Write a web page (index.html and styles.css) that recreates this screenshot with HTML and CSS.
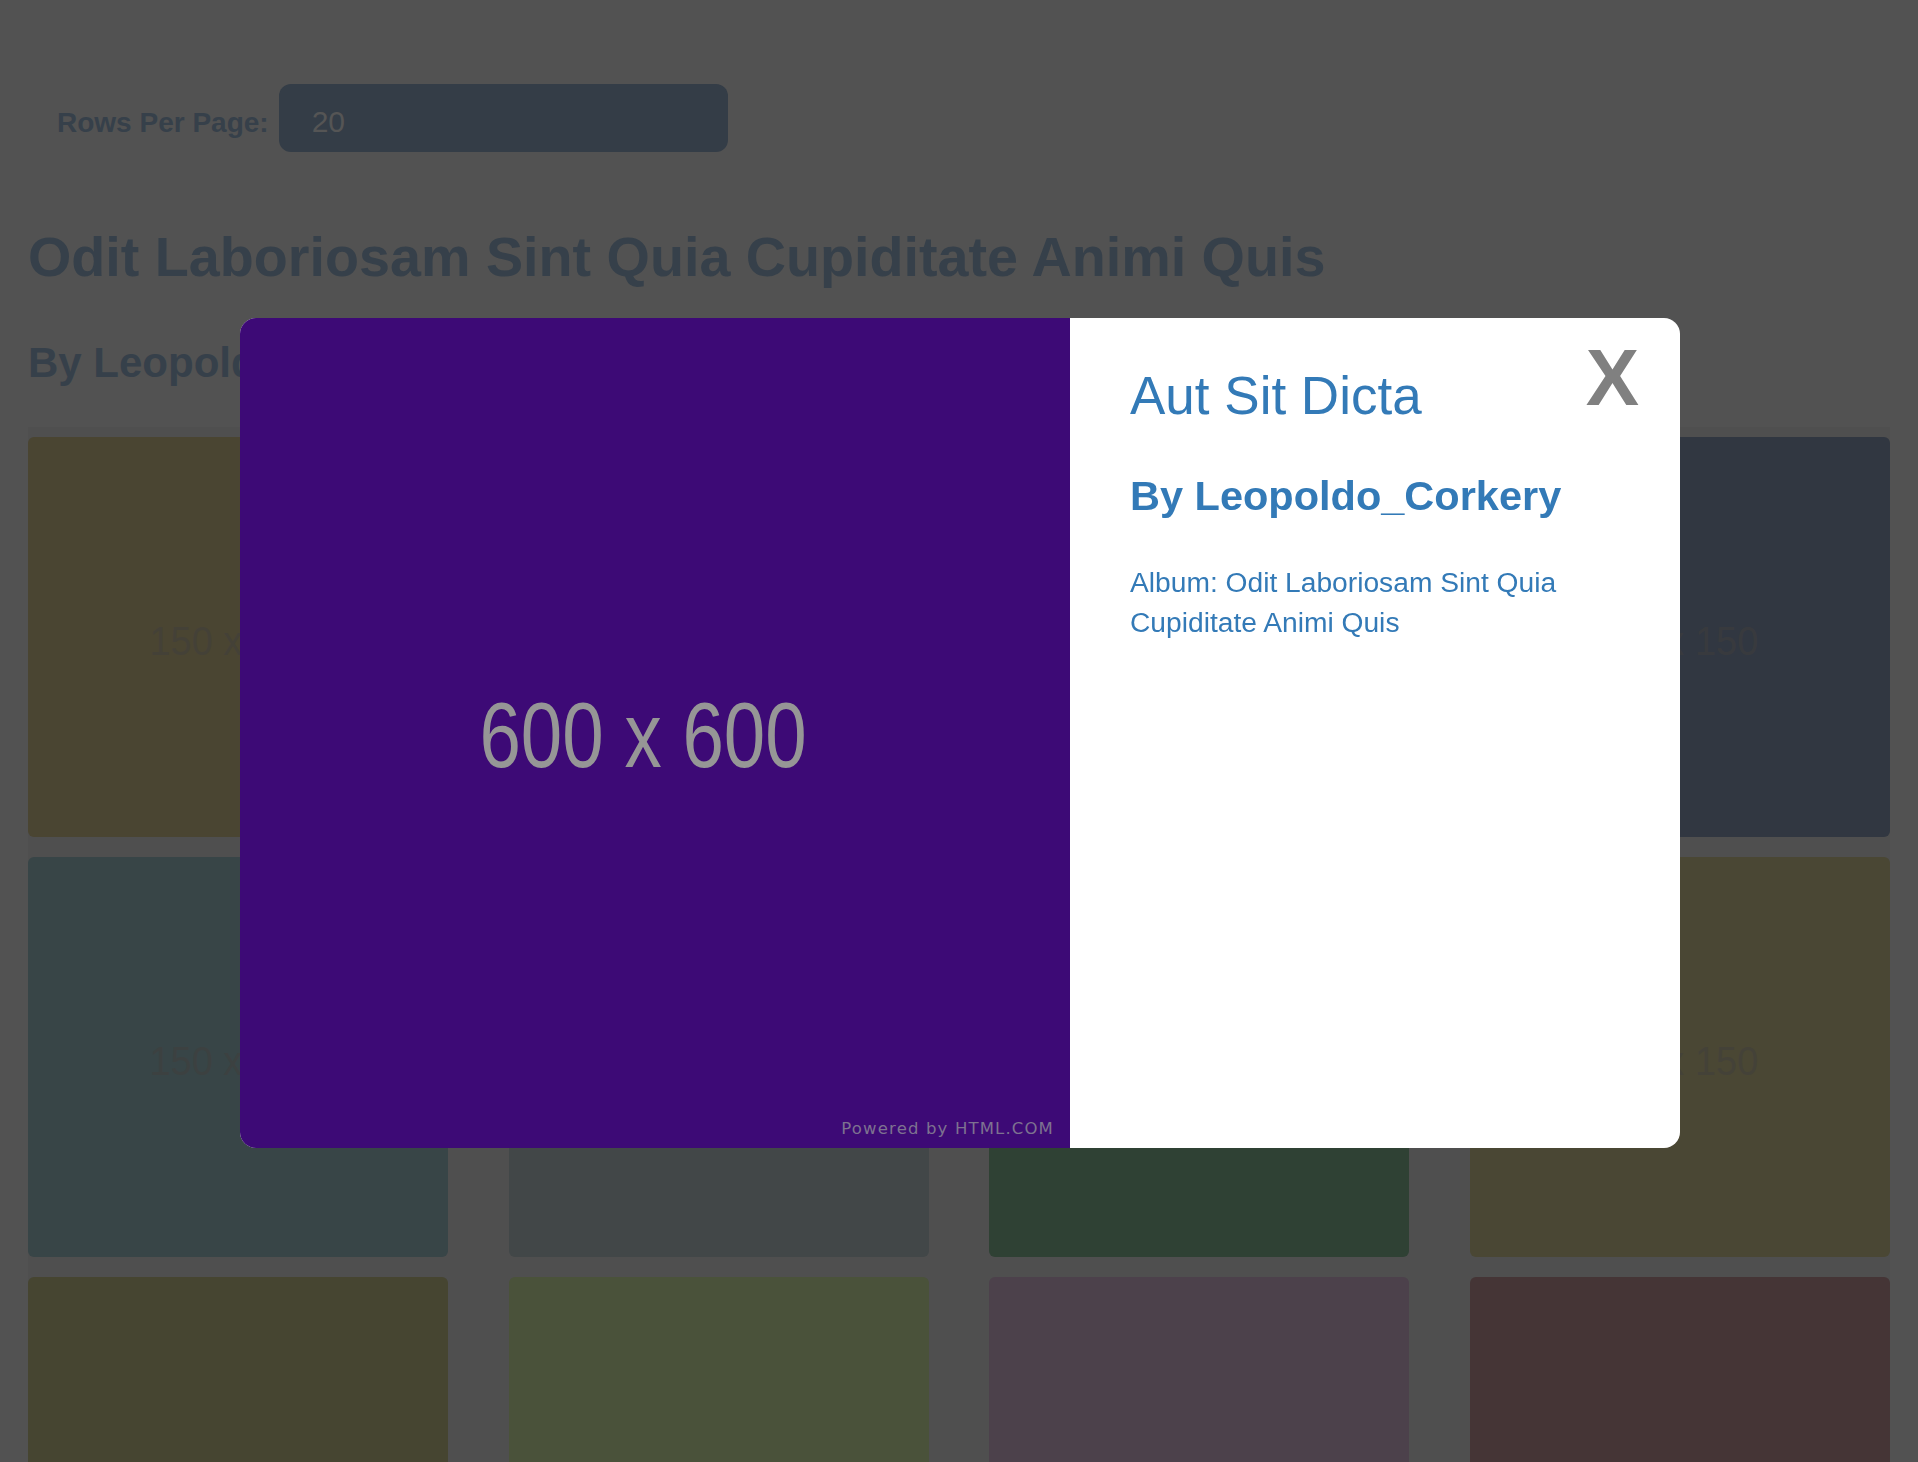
FILE: index.html
```html
<!DOCTYPE html>
<html lang="en">
<head>
<meta charset="utf-8">
<title>Odit Laboriosam Sint Quia Cupiditate Animi Quis</title>
<link rel="stylesheet" href="styles.css">
</head>
<body>
<main class="page">
  <div class="toolbar">
    <label class="rows-label" for="rows">Rows Per Page:</label>
    <input id="rows" class="rows-input" value="20">
  </div>
  <h1 class="album-title">Odit Laboriosam Sint Quia Cupiditate Animi Quis</h1>
  <h2 class="album-author">By Leopoldo_Corkery</h2>
  <div class="photo-grid">
    <div class="photo olive"><span>150 x 150</span></div>
    <div class="photo teal"><span>150 x 150</span></div>
    <div class="photo mauve"><span>150 x 150</span></div>
    <div class="photo slate"><span>150 x 150</span></div>
    <div class="photo teal"><span>150 x 150</span></div>
    <div class="photo grey"><span>150 x 150</span></div>
    <div class="photo green"><span>150 x 150</span></div>
    <div class="photo olive2"><span>150 x 150</span></div>
    <div class="photo olive3"><span>150 x 150</span></div>
    <div class="photo moss"><span>150 x 150</span></div>
    <div class="photo plum"><span>150 x 150</span></div>
    <div class="photo brick"><span>150 x 150</span></div>
  </div>
</main>

<div class="modal-layer">
  <div class="modal">
    <div class="modal-image">
      <span class="placeholder-text">600 x 600</span>
      <span class="powered">Powered by HTML.COM</span>
    </div>
    <div class="modal-info">
      <button class="close" type="button">X</button>
      <h2 class="photo-title">Aut Sit Dicta</h2>
      <h3 class="photo-author">By Leopoldo_Corkery</h3>
      <p class="photo-album">Album: Odit Laboriosam Sint Quia Cupiditate Animi Quis</p>
    </div>
  </div>
</div>
</body>
</html>
```
FILE: styles.css
```css
html, body {
  margin: 0;
}

body {
  background: #525252;
  font-family: "Liberation Sans", Arial, sans-serif;
  overflow: hidden;
}

.page {
  padding: 84px 28px 0;
}

.toolbar {
  display: flex;
  align-items: baseline;
  padding-left: 29px;
}

.rows-label {
  font-size: 28px;
  font-weight: 700;
  color: #36404a;
  margin-right: 10px;
}

.rows-input {
  width: 449px;
  height: 68px;
  box-sizing: border-box;
  border: 0;
  border-radius: 12px;
  background: #343d47;
  padding: 8px 0 0 33px;
  font-family: "Liberation Sans", Arial, sans-serif;
  font-size: 30px;
  color: #555555;
  outline: none;
}

.album-title {
  margin: 73px 0 0;
  font-size: 55.7px;
  font-weight: 700;
  line-height: 1.15;
  color: #36404a;
}

.album-author {
  margin: 50px 0 0;
  font-size: 42px;
  font-weight: 700;
  line-height: 1.15;
  color: #36404a;
}

.photo-grid {
  margin-top: 40px;
  padding-top: 10px;
  background: #4f4f4f;
  display: grid;
  grid-template-columns: repeat(4, 420px);
  justify-content: space-between;
  row-gap: 20px;
}

.photo {
  height: 400px;
  border-radius: 6px;
  display: flex;
  align-items: center;
  justify-content: center;
}

.photo span {
  font-size: 40px;
  color: rgba(64, 62, 60, 0.55);
  transform: translate(-5px, 4px) scaleX(0.95);
}

.olive  { background: #4a4532; }
.teal   { background: #384547; }
.mauve  { background: #4a4147; }
.slate  { background: #313741; }
.grey   { background: #424748; }
.green  { background: #2f4134; }
.olive2 { background: #4a4734; }
.olive3 { background: #464531; }
.moss   { background: #4a523a; }
.plum   { background: #4c414b; }
.brick  { background: #453536; }

/* modal */
.modal-layer {
  position: fixed;
  inset: 0;
  display: flex;
  align-items: center;
  justify-content: center;
  padding: 4px 0 0 2px;
}

.modal {
  display: flex;
  width: 1440px;
  height: 830px;
  border-radius: 16px;
  overflow: hidden;
  background: #ffffff;
}

.modal-image {
  width: 830px;
  flex: none;
  position: relative;
  background: #3d0a76;
  display: flex;
  align-items: center;
  justify-content: center;
}

.placeholder-text {
  font-size: 92px;
  line-height: 1;
  color: #969696;
  transform: translate(-12px, 2px) scaleX(0.81);
}

.powered {
  position: absolute;
  right: 16px;
  bottom: 11px;
  font-family: "DejaVu Sans", sans-serif;
  font-size: 16.5px;
  line-height: 1;
  letter-spacing: 1.15px;
  color: #7d7290;
}

.modal-info {
  flex: 1;
  position: relative;
  padding: 48px 60px 0;
}

.close {
  position: absolute;
  top: 20px;
  right: 41px;
  border: 0;
  padding: 0;
  background: none;
  font-family: "Liberation Sans", Arial, sans-serif;
  font-size: 80px;
  font-weight: 700;
  line-height: 1;
  color: #808080;
}

.photo-title {
  margin: 0;
  font-size: 53px;
  font-weight: 400;
  line-height: 1.15;
  color: #337ab7;
}

.photo-author {
  margin: 45px 0 0;
  font-size: 41.5px;
  font-weight: 700;
  line-height: 1.15;
  color: #337ab7;
}

.photo-album {
  margin: 42px 0 0;
  font-size: 28.2px;
  line-height: 40px;
  color: #337ab7;
}
```
